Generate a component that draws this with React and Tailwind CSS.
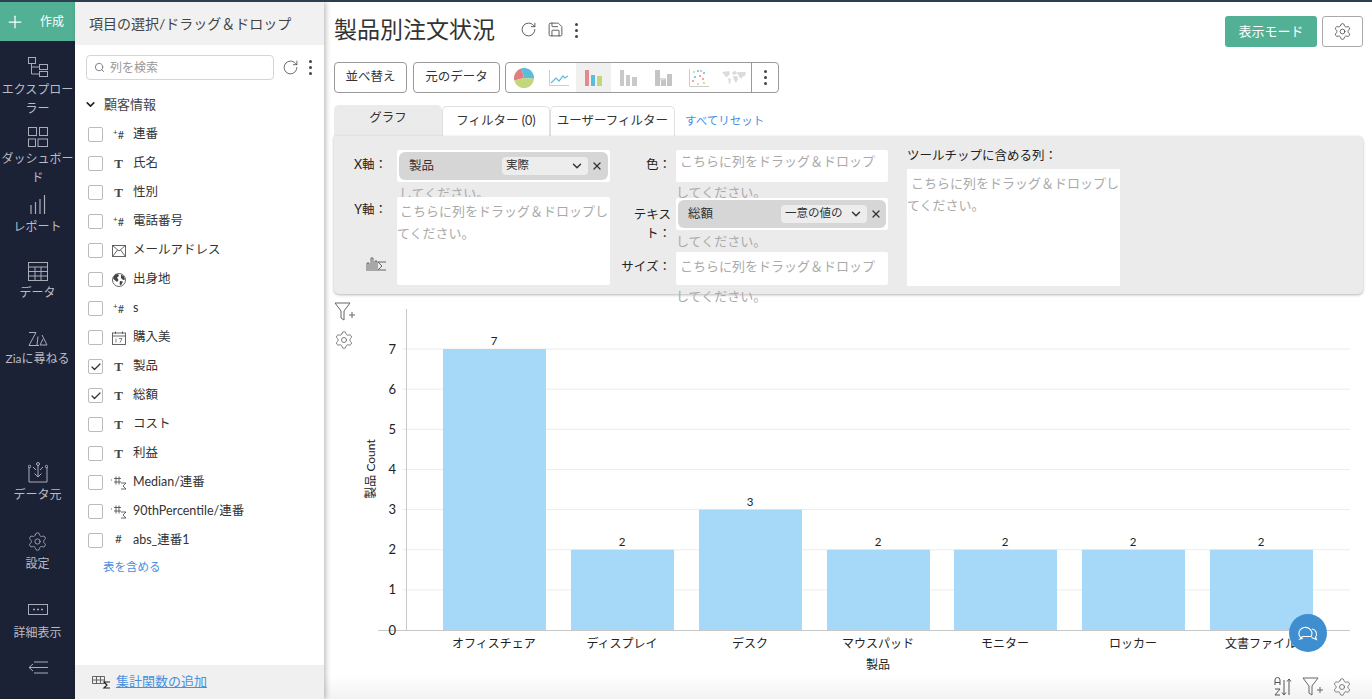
import React from "react";
import { Plus, RotateCw, Save, Settings, ChevronDown, X, Search, Check } from "lucide-react";

const fields = [
  { name: "連番", type: "plus" },
  { name: "氏名", type: "text" },
  { name: "性別", type: "text" },
  { name: "電話番号", type: "plus" },
  { name: "メールアドレス", type: "mail" },
  { name: "出身地", type: "globe" },
  { name: "s", type: "plus" },
  { name: "購入美", type: "date" },
  { name: "製品", type: "text", checked: true },
  { name: "総額", type: "text", checked: true },
  { name: "コスト", type: "text" },
  { name: "利益", type: "text" },
  { name: "Median/連番", type: "agg" },
  { name: "90thPercentile/連番", type: "agg" },
  { name: "abs_連番1", type: "hash" },
];

const bars = [
  { label: "オフィスチェア", value: 7, x: 444 },
  { label: "ディスプレイ", value: 2, x: 572 },
  { label: "デスク", value: 3, x: 700 },
  { label: "マウスパッド", value: 2, x: 828 },
  { label: "モニター", value: 2, x: 955 },
  { label: "ロッカー", value: 2, x: 1083 },
  { label: "文書ファイル", value: 2, x: 1211 },
];

function Dots() {
  return (
    <div className="flex flex-col gap-[3px]">
      <span className="w-[3px] h-[3px] rounded-full bg-[#444]"></span>
      <span className="w-[3px] h-[3px] rounded-full bg-[#444]"></span>
      <span className="w-[3px] h-[3px] rounded-full bg-[#444]"></span>
    </div>
  );
}

function FieldIcon({ type }) {
  if (type === "text") return <span className="font-['Liberation_Serif',serif] font-bold text-[13px] text-[#444]">T</span>;
  if (type === "plus")
    return (
      <span className="text-[11px] text-[#444] leading-none">
        <sup className="text-[8px]">+</sup>#
      </span>
    );
  if (type === "hash") return <span className="text-[12px] text-[#444] -mt-1">#</span>;
  if (type === "agg")
    return (
      <svg width="18" height="18" viewBox="0 0 18 18" fill="none" stroke="#444" strokeWidth="0.8">
        <path d="M1 6h1M6 2.500v8M9 2.500v8M4 4.500h7M4 8h7M11 9h5l-3 3 3 3h-5" />
      </svg>
    );
  if (type === "mail")
    return (
      <svg width="14" height="12" viewBox="0 0 14 12" fill="none" stroke="#555" strokeWidth="0.9">
        <rect x="0.500" y="0.500" width="13" height="11" />
        <path d="M0.500 0.500 7 6l6.500-5.500M0.500 11.500 5.500 5M13.500 11.500 8.500 5" />
      </svg>
    );
  if (type === "globe")
    return (
      <svg width="14" height="14" viewBox="0 0 14 14">
        <circle cx="7" cy="7" r="6.500" fill="#fff" stroke="#666" />
        <path d="M3 1.500 6 1l1 2-2 1.500L6.500 7 5 9 2 6.500 1 5zM9 1.500l3 2 1 3-2 .5-2-2zM8 8l3 .5L9 12.500 7.500 11z" fill="#444" />
      </svg>
    );
  return (
    <svg width="14" height="14" viewBox="0 0 14 14" fill="none" stroke="#555" strokeWidth="0.9">
      <rect x="0.500" y="2" width="13" height="11.500" />
      <path d="M0.500 5h13M3.500 0.500V3M10.500 0.500V3" />
      <path d="M4 7.500v4M7 7.500h3L8 11.500" strokeWidth="0.7" />
    </svg>
  );
}

function NavItem({ icon, label, className }) {
  return (
    <div className={"flex flex-col items-center text-center text-[12px] leading-[19px] text-[#b9bcc6] " + className}>
      {icon}
      <span className="w-[75px]">{label}</span>
    </div>
  );
}

const navStroke = { fill: "none", stroke: "#a9adb8", strokeWidth: 1 };

function Sidebar() {
  return (
    <aside className="w-[75px] shrink-0 h-full bg-[#1c2235] flex flex-col">
      <div className="h-[39px] bg-[#52b095] flex items-center pl-[5px] gap-[15px] text-white text-[12px]">
        <Plus size={20} strokeWidth={1.5} />
        <span>作成</span>
      </div>
      <NavItem
        className="mt-[16px]"
        label="エクスプローラー"
        icon={
          <svg width="20" height="21" viewBox="0 0 20 21" className="mb-[2px]" {...navStroke}>
            <rect x="0.500" y="0.500" width="7" height="6" />
            <rect x="11.500" y="7.500" width="8" height="5" />
            <rect x="11.500" y="14.500" width="8" height="5" />
            <path d="M3.500 6.500V17h8M3.500 10h8" />
          </svg>
        }
      />
      <NavItem
        className="mt-[9px]"
        label="ダッシュボード"
        icon={
          <svg width="20" height="20" viewBox="0 0 20 20" className="mb-[2px]" {...navStroke}>
            <rect x="0.500" y="0.500" width="8" height="8" />
            <rect x="11.500" y="0.500" width="8" height="8" />
            <rect x="0.500" y="12" width="7" height="7.500" />
            <rect x="10" y="12" width="9.500" height="7.500" />
          </svg>
        }
      />
      <NavItem
        className="mt-[8px]"
        label="レポート"
        icon={
          <svg width="18" height="20" viewBox="0 0 18 20" className="mb-[2px]" {...navStroke}>
            <path d="M2 10v9M6.500 7v12M11 4v15M15.500 0v19" strokeWidth="1.200" />
          </svg>
        }
      />
      <NavItem
        className="mt-[26px]"
        label="データ"
        icon={
          <svg width="20" height="19" viewBox="0 0 20 19" className="mb-[2px]" {...navStroke}>
            <rect x="0.500" y="0.500" width="19" height="18" />
            <path d="M0.500 5h19M0.500 9.500h19M0.500 14h19M7 5v13.500M13 5v13.500" />
          </svg>
        }
      />
      <NavItem
        className="mt-[29px]"
        label="Ziaに尋ねる"
        icon={
          <svg width="20" height="16" viewBox="0 0 20 16" className="mb-[2px]" {...navStroke}>
            <path d="M1 1.500h7L1 14.500h10M10 5.500 9 14M14 4l5 10h-7l3-6" />
          </svg>
        }
      />
      <NavItem
        className="mt-[94px]"
        label="データ元"
        icon={
          <svg width="20" height="21" viewBox="0 0 20 21" className="mb-[2px]" {...navStroke}>
            <path d="M1 8v12h18V8M10 3v12M6.500 11.500 10 15l3.500-3.500M1 5v3M19 5v3M5 5l3 3M15 5l-3 3" />
            <circle cx="10" cy="2" r="1.500" />
            <circle cx="1.500" cy="4.500" r="1.200" />
            <circle cx="18.500" cy="4.500" r="1.200" />
          </svg>
        }
      />
      <NavItem
        className="mt-[27px]"
        label="設定"
        icon={<Settings size={21} strokeWidth={1} color="#a9adb8" className="mb-[2px]" />}
      />
      <NavItem
        className="mt-[31px]"
        label="詳細表示"
        icon={
          <svg width="20" height="11" viewBox="0 0 20 11" className="mb-[8px]" {...navStroke}>
            <rect x="0.500" y="0.500" width="19" height="10" />
            <path d="M5 5.500h2M9 5.500h2M13 5.500h2" strokeWidth="1.500" />
          </svg>
        }
      />
      <div className="mt-[19px] flex justify-center">
        <svg width="20" height="13" viewBox="0 0 20 13" {...navStroke}>
          <path d="M6 1h14M1 6.500h19M6 12h14M5 3 1 6.500 5 10" />
        </svg>
      </div>
    </aside>
  );
}

function FieldPanel() {
  return (
    <section className="relative z-10 w-[249px] shrink-0 h-full bg-white shadow-[2px_0_5px_rgba(0,0,0,0.25)] flex flex-col">
      <div className="h-[43px] bg-[#f1f1f1] flex items-center pl-[14px] text-[14px] text-[#444]">項目の選択/ドラッグ＆ドロップ</div>
      <div className="mt-[10px] flex items-center pl-[11px]">
        <div className="w-[188px] h-[25px] border border-[#d5d5d5] rounded-[4px] flex items-center pl-[7px] gap-[5px] text-[12px] text-[#999]">
          <Search size={11} color="#777" />
          <span>列を検索</span>
        </div>
        <RotateCw size={17} strokeWidth={1} color="#333" className="ml-[8px]" />
        <div className="ml-[10px]">
          <Dots />
        </div>
      </div>
      <div className="mt-[12px] flex items-center pl-[9px] h-[25px] text-[13px] text-[#444]">
        <ChevronDown size={13} strokeWidth={3} color="#222" />
        <span className="ml-[7px]">顧客情報</span>
      </div>
      <div className="mt-[3px] flex flex-col">
        {fields.map((f) => (
          <div key={f.name} className="h-[29px] flex items-center pl-[13px] text-[12.500px] text-[#333]">
            <div className="w-[15px] h-[15px] border border-[#bbb] rounded-[2px] flex items-center justify-center bg-white">
              {f.checked && <Check size={12} strokeWidth={2.500} color="#333" />}
            </div>
            <div className="w-[30px] flex justify-center pl-[1px]">
              <FieldIcon type={f.type} />
            </div>
            <span>{f.name}</span>
          </div>
        ))}
      </div>
      <div className="pl-[28px] mt-[3px] text-[11.500px] text-[#4a8fe0]">表を含める</div>
      <div className="mt-auto h-[34px] bg-[#f0f0f0] flex items-center pl-[17px] text-[13px]">
        <svg width="19" height="14" viewBox="0 0 19 14" fill="none" stroke="#555" strokeWidth="0.900">
          <path d="M0.500 1.500h12v7h-12zM0.500 5h12M4.500 1.500v7M8.500 1.500v7" />
          <path d="M18 7h-6l3 3-3 3h6" stroke="#222" strokeWidth="1.200" />
        </svg>
        <span className="ml-[5px] text-[#4a8fe0] underline">集計関数の追加</span>
      </div>
    </section>
  );
}

function ChartTypes() {
  return (
    <div className="ml-[5px] h-[31px] w-[274px] border border-[#999] rounded-[4px] flex items-center">
      <div className="w-[35px] h-full flex items-center justify-center">
        <svg width="20" height="20" viewBox="0 0 20 20">
          <path d="M10 10 7.500 .300A10 10 0 0 0 .300 12.500z" fill="#e07f7f" />
          <path d="M10 10 7.500 .300A10 10 0 0 1 20 10.800z" fill="#5cbcdc" />
          <path d="M10 10 .300 12.500A10 10 0 0 0 20 10.800z" fill="#c3d67a" />
        </svg>
      </div>
      <div className="w-[35px] h-full flex items-center justify-center">
        <svg width="20" height="16" viewBox="0 0 20 16" fill="none">
          <path d="M.500 0v15.500H20" stroke="#ccc" />
          <path d="M2 13l5-5 3 3 4-5 2 2 3-2" stroke="#5cbcdc" strokeWidth="1.200" />
        </svg>
      </div>
      <div className="w-[35px] h-full flex items-center justify-center bg-[#f0f0f0]">
        <svg width="17" height="16" viewBox="0 0 17 16">
          <rect x="0" width="4" y="0" height="16" fill="#e58a8a" />
          <rect x="6" width="4" y="5" height="11" fill="#5cbcdc" />
          <rect x="12" width="5" y="6" height="10" fill="#c3d67a" />
        </svg>
      </div>
      <div className="w-[35px] h-full flex items-center justify-center">
        <svg width="17" height="16" viewBox="0 0 17 16" fill="#c9c9c9">
          <rect x="0" width="4" y="0" height="16" />
          <rect x="6" width="4" y="5" height="11" />
          <rect x="12" width="5" y="7" height="9" />
        </svg>
      </div>
      <div className="w-[35px] h-full flex items-center justify-center">
        <svg width="17" height="16" viewBox="0 0 17 16" fill="#c4c4c4">
          <rect x="0" width="5" y="0" height="16" />
          <rect x="6" width="5" y="9" height="7" />
          <rect x="12" width="5" y="4" height="12" />
          <path d="M5 8l6 0v1l-6 2z" fill="#ddd" />
        </svg>
      </div>
      <div className="w-[35px] h-full flex items-center justify-center">
        <svg width="20" height="18" viewBox="0 0 20 18">
          <path d="M.500 0v17.500H20" stroke="#ccc" fill="none" />
          <g fill="#c3d67a"><circle cx="5" cy="3" r="1" /><circle cx="15" cy="14" r="1" /><circle cx="9" cy="15" r="1" /></g>
          <g fill="#5cbcdc"><circle cx="9" cy="2" r="1" /><circle cx="15" cy="4" r="1" /><circle cx="6" cy="8" r="1" /></g>
          <g fill="#e58a8a"><circle cx="11" cy="7" r="1" /><circle cx="4" cy="12" r="1" /><circle cx="14" cy="10" r="1" /></g>
          <circle cx="12" cy="2" r="1" fill="#d8a3d8" />
        </svg>
      </div>
      <div className="w-[35px] h-full flex items-center justify-center">
        <svg width="24" height="13" viewBox="0 0 24 13" fill="#dcdcdc">
          <path d="M0 1l7-1 1 3-3 3-1 0zM6 7l3 1-1 5-1 0zM10 1l4-1 1 3-4 1zM11 5l4 0 1 3-2 4-2-3zM15 1l9 0-1 4-3 1 0 2-3-2z" />
        </svg>
      </div>
      <div className="flex-1 h-full border-l border-[#999] flex items-center justify-center">
        <Dots />
      </div>
    </div>
  );
}

function Hint({ className, first = true }) {
  return (
    <div className={"text-[13px] text-[#aaa] leading-[22px] " + className}>
      {first ? "こちらに列をドラッグ＆ドロップしてください。" : "してください。"}
    </div>
  );
}

function Chip({ name, agg }) {
  return (
    <div className="m-[2px] h-[28px] bg-[#d6d6d6] rounded-[6px] flex items-center pl-[10px] text-[12.500px] text-[#333]">
      <span className="w-[93px] shrink-0">{name}</span>
      <div className="w-[86px] h-[18px] bg-[#ededed] rounded-[4px] flex items-center justify-between pl-[4px] pr-[4px] text-[11.500px] leading-none">
        <span className="-mt-[3px]">{agg}</span>
        <ChevronDown size={14} strokeWidth={2.500} />
      </div>
      <X size={12} strokeWidth={2.500} className="ml-[3px]" />
    </div>
  );
}

function FieldConfig() {
  return (
    <div className="w-[1029px] h-[158px] bg-[#ebebeb] rounded-[5px] rounded-tl-none shadow-[0_1px_3px_rgba(0,0,0,0.3)] flex pt-[14px] text-[12.500px] text-[#222]">
      <div className="w-[276px] shrink-0 flex flex-col">
        <div className="flex h-[47px]">
          <div className="w-[63px] text-right pr-[10px] pt-[6px]">X軸：</div>
          <div className="w-[213px] h-[32px] bg-white rounded-[2px]">
            <Chip name="製品" agg="実際" />
            <Hint first={false} className="pl-[2px]" />
          </div>
        </div>
        <div className="flex">
          <div className="w-[63px] pr-[10px] h-[88px] flex flex-col items-end pt-[4px]">
            <span>Y軸：</span>
            <svg width="21" height="16" viewBox="0 0 21 16" fill="none" stroke="#555" strokeWidth="0.900" className="mt-[36px]">
              <path d="M1 15V7h2v8M5 15V2h2v13M9 15V5h2v10M20 6h-8l4 4-4 4h8" />
            </svg>
          </div>
          <div className="relative w-[213px] h-[88px] bg-white rounded-[2px] pt-[3px]">
            <Hint className="indent-[3px] leading-[20px]" />
          </div>
        </div>
      </div>
      <div className="w-[278px] shrink-0 flex flex-col">
        <div className="flex h-[48px]">
          <div className="w-[66px] text-right pr-[5px] pt-[6px]">色：</div>
          <div className="w-[212px] h-[32px] bg-white rounded-[2px]">
            <div className="text-[13px] text-[#aaa] leading-[31px] indent-[4px] -mt-[4px]">こちらに列をドラッグ＆ドロップしてください。</div>
          </div>
        </div>
        <div className="flex h-[54px]">
          <div className="w-[66px] pl-[22px] pr-[5px] text-right leading-[19px] pt-[7px]">テキスト：</div>
          <div className="relative w-[212px] h-[32px] bg-white rounded-[2px]">
            <Chip name="総額" agg="一意の値の" />
            <Hint first={false} />
          </div>
        </div>
        <div className="flex">
          <div className="w-[66px] text-right pr-[5px] pt-[6px] whitespace-nowrap">サイズ：</div>
          <div className="relative w-[212px] h-[33px] bg-white rounded-[2px]">
            <div className="text-[13px] text-[#aaa] leading-[30px] indent-[4px] -mt-[1px]">こちらに列をドラッグ＆ドロップしてください。</div>
          </div>
        </div>
      </div>
      <div className="ml-[19px] w-[213px] flex flex-col">
        <div className="h-[21px] -mt-[2px] leading-[16px]">ツールチップに含める列：</div>
        <div className="w-[213px] h-[117px] bg-white pt-[3px]">
          <Hint className="indent-[4px] leading-[20px]" />
        </div>
      </div>
    </div>
  );
}

function BarChart() {
  const y = (v) => 630 - v * 40.14;
  return (
    <svg width="1012" height="375" viewBox="360 300 1012 375" className="shrink-0 -ml-[1px]" fontFamily="Lato, 'Noto Sans CJK JP', sans-serif" fontSize="12" fill="#222">
      {[1, 2, 3, 4, 5, 6, 7].map((v) => (
        <line key={v} x1="403" x2="1351" y1={y(v)} y2={y(v)} stroke="#ececec" />
      ))}
      <line x1="407.500" x2="407.500" y1="309" y2="630" stroke="#c8c8c8" />
      <line x1="379" x2="1351" y1="630.500" y2="630.500" stroke="#c8c8c8" />
      {[0, 1, 2, 3, 4, 5, 6, 7].map((v) => (
        <text key={v} x="397" y={y(v) + 4.500} fontSize="13" textAnchor="end">{v}</text>
      ))}
      {bars.map((b) => (
        <g key={b.label}>
          <rect x={b.x} y={y(b.value)} width="103" height={630 - y(b.value)} fill="#a5d9f7" />
          <text x={b.x + 51} y={y(b.value) - 4} fontSize="11.500" textAnchor="middle">{b.value}</text>
          <text x={b.x + 51} y="648" textAnchor="middle">{b.label}</text>
        </g>
      ))}
      <text x="879" y="669" textAnchor="middle">製品</text>
      <text transform="translate(376 469) rotate(-90)" textAnchor="middle">製品 Count</text>
    </svg>
  );
}

function FilterPlus() {
  return (
    <svg width="22" height="20" viewBox="0 0 22 20" fill="none" stroke="#666" strokeWidth="1">
      <path d="M1 1h15l-6 8v9l-3-2V9zM15 13h6M18 10v6" />
    </svg>
  );
}

function Main() {
  return (
    <main className="relative flex-1 min-w-0 h-full flex flex-col pl-[10px]">
      <div className="h-[60px] flex items-start">
        <h1 className="text-[23px] leading-[30px] mt-[12px] text-[#333] font-normal w-[186px] shrink-0 whitespace-nowrap">製品別注文状況</h1>
        <RotateCw size={17} strokeWidth={1.200} color="#444" className="mt-[19px]" />
        <Save size={17} strokeWidth={1.200} color="#444" className="ml-[10px] mt-[19px]" />
        <div className="ml-[11px] mt-[21px]">
          <Dots />
        </div>
        <button className="ml-auto mt-[14px] w-[92px] h-[31px] bg-[#52b095] text-white text-[13px] rounded-[3px]">表示モード</button>
        <button className="ml-[5px] mr-[9px] mt-[14px] w-[41px] h-[31px] border border-[#aaa] rounded-[3px] flex items-center justify-center">
          <Settings size={19} strokeWidth={1} color="#444" />
        </button>
      </div>
      <div className="flex items-center h-[31px] text-[12.500px] text-[#333]">
        <button className="w-[73px] h-full border border-[#999] rounded-[4px]">並べ替え</button>
        <button className="ml-[6px] w-[87px] h-full border border-[#999] rounded-[4px]">元のデータ</button>
        <ChartTypes />
      </div>
      <div className="mt-[12px] h-[31px] flex items-end text-[12.500px] text-[#333]">
        <div className="w-[108px] h-full bg-[#ebebeb] rounded-t-[5px] flex items-center justify-center pb-[4px]">グラフ</div>
        <div className="w-[108px] h-[30px] border border-b-0 border-[#e0e0e0] rounded-t-[5px] flex items-center justify-center">フィルター (0)</div>
        <div className="w-[125px] h-[30px] border border-b-0 border-[#e0e0e0] rounded-t-[5px] flex items-center justify-center whitespace-nowrap">ユーザーフィルター</div>
        <div className="ml-[10px] self-center text-[11.500px] text-[#4a8fe0]">すべてリセット</div>
      </div>
      <FieldConfig />
      <div className="mt-[6px] flex -ml-[10px] pl-[10px]">
        <div className="w-[26px] shrink-0 flex flex-col items-start gap-[8px] pt-[2px]">
          <FilterPlus />
          <Settings size={20} strokeWidth={1} color="#666" />
        </div>
        <BarChart />
      </div>
      <div className="-ml-[10px] flex-1 bg-gradient-to-b from-white to-[#f2f2f2] flex items-center justify-end gap-[8px] pr-[20px]">
        <svg width="20" height="20" viewBox="0 0 20 20" fill="none" stroke="#555" strokeWidth="1">
          <path d="M1 8V3a2.500 2.500 0 0 1 5 0v5M1 5.500h5M1 12h5l-5 6h5M10 3v15M8 15.500l2 2.500 2-2.500M15 18V2M13 4.500 15 2l2 2.500" />
        </svg>
        <FilterPlus />
        <Settings size={20} strokeWidth={1} color="#666" />
      </div>
      <div className="absolute left-[965px] top-[612px] w-[38px] h-[38px] rounded-full bg-[#3f8fd0] flex items-center justify-center">
        <svg width="20" height="17" viewBox="0 0 20 17" fill="none" stroke="#fff" strokeWidth="1.100">
          <path d="M4 13.500A6.500 6 0 1 1 13 11.500H4.500L2 14z" />
          <path d="M14 4a5 5 0 0 1 3.500 8l1 2.500-5-2" />
        </svg>
      </div>
    </main>
  );
}

export default function App() {
  return (
    <div className="w-[1372px] h-[699px] overflow-hidden bg-white border-t-2 border-[#2c3e50] flex font-['Lato','Noto_Sans_CJK_JP',sans-serif]">
      <Sidebar />
      <FieldPanel />
      <Main />
    </div>
  );
}
